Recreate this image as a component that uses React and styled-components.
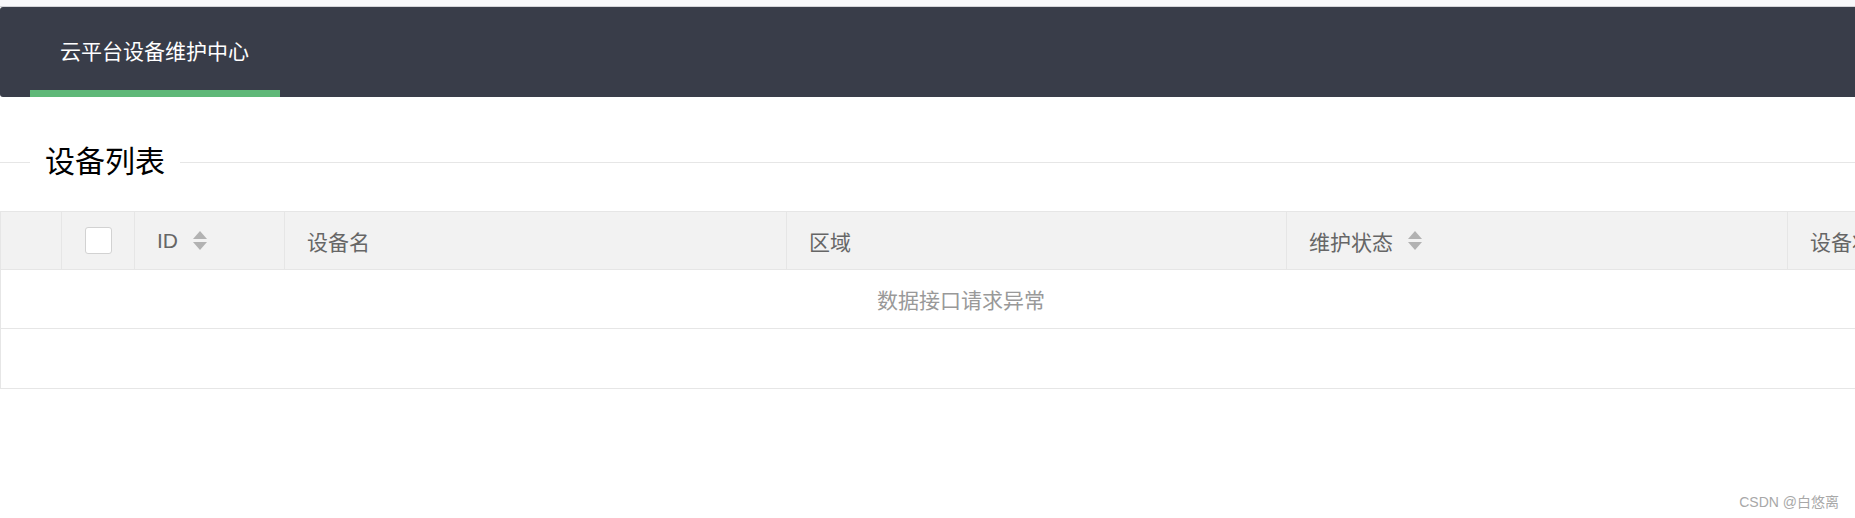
import React from "react";
import styled, { createGlobalStyle } from "styled-components";

const GlobalStyle = createGlobalStyle`
  html, body { margin: 0; padding: 0; background: #fff; overflow: hidden; }
  body { font-family: "Liberation Sans", Arial, "Noto Sans CJK SC", sans-serif; }
  * { box-sizing: border-box; }
`;

const Page = styled.div`
  position: relative;
  width: 1855px;
  height: 518px;
  overflow: hidden;
  background: #fff;
`;

const TopStrip = styled.div`
  height: 7px;
  background: #f8f8fa;
  border-bottom: 1px solid #d4d4d8;
`;

const Header = styled.div`
  display: flex;
  height: 90px;
  background: #393d49;
  border-radius: 3px 0 0 3px;
  padding-left: 30px;
`;

const NavItem = styled.div`
  position: relative;
  padding: 0 31px 0 30px;
  line-height: 90px;
  font-size: 21px;
  color: #fff;
  white-space: nowrap;
`;

const ThisBar = styled.span`
  position: absolute;
  left: 0;
  right: 0;
  bottom: 0;
  height: 7px;
  background: #5fb878;
`;

const FieldTitle = styled.div`
  display: flex;
  align-items: center;
  height: 40px;
  margin: 45px 0 29px;
  &::before {
    content: "";
    width: 30px;
    height: 1px;
    background: #e6e6e6;
  }
  &::after {
    content: "";
    flex: 1;
    height: 1px;
    background: #e6e6e6;
  }
`;

const Legend = styled.span`
  padding: 0 15px;
  font-size: 30px;
  color: #000;
  line-height: 40px;
`;

const Table = styled.div`
  width: 1922px;
  border-top: 1px solid #e6e6e6;
  border-left: 1px solid #e6e6e6;
`;

const HeadRow = styled.div`
  display: flex;
  height: 58px;
  background: #f2f2f2;
  border-bottom: 1px solid #e6e6e6;
`;

const HeadCell = styled.div`
  display: flex;
  align-items: center;
  justify-content: ${(p) => (p.$center ? "center" : "flex-start")};
  flex: ${(p) => (p.$w ? `0 0 ${p.$w}px` : "1")};
  padding: ${(p) => (p.$center ? "0" : "0 22px")};
  border-right: 1px solid #e6e6e6;
  font-size: 21px;
  color: #666;
  white-space: nowrap;
  overflow: hidden;
`;

const Checkbox = styled.span`
  display: block;
  width: 27px;
  height: 27px;
  background: #fff;
  border: 1px solid #d2d2d2;
  border-radius: 3px;
`;

const BodyRow = styled.div`
  display: flex;
  align-items: center;
  justify-content: center;
  height: ${(p) => p.$h}px;
  border-bottom: 1px solid #e6e6e6;
  border-right: 1px solid #e6e6e6;
  font-size: 21px;
  color: #999;
`;

const Watermark = styled.div`
  position: absolute;
  right: 16px;
  bottom: 7px;
  font-size: 14px;
  color: #a8a8a8;
`;

const SortIcon = () => (
  <svg width="14" height="20" viewBox="0 0 14 20" style={{ marginLeft: 15 }}>
    <polygon points="7,0 14,8 0,8" fill="#b2b2b2" />
    <polygon points="0,11 14,11 7,19" fill="#b2b2b2" />
  </svg>
);

export default function App() {
  return (
    <Page>
      <GlobalStyle />
      <TopStrip />
      <Header>
        <NavItem>
          云平台设备维护中心
          <ThisBar />
        </NavItem>
      </Header>
      <FieldTitle>
        <Legend>设备列表</Legend>
      </FieldTitle>
      <Table>
        <HeadRow>
          <HeadCell $w={61} $center />
          <HeadCell $w={73} $center>
            <Checkbox />
          </HeadCell>
          <HeadCell $w={150}>
            ID
            <SortIcon />
          </HeadCell>
          <HeadCell $w={502}>设备名</HeadCell>
          <HeadCell $w={500}>区域</HeadCell>
          <HeadCell $w={501}>
            维护状态
            <SortIcon />
          </HeadCell>
          <HeadCell>设备状态</HeadCell>
        </HeadRow>
        <BodyRow $h={59}>数据接口请求异常</BodyRow>
        <BodyRow $h={60} />
      </Table>
      <Watermark>CSDN @白悠离</Watermark>
    </Page>
  );
}
